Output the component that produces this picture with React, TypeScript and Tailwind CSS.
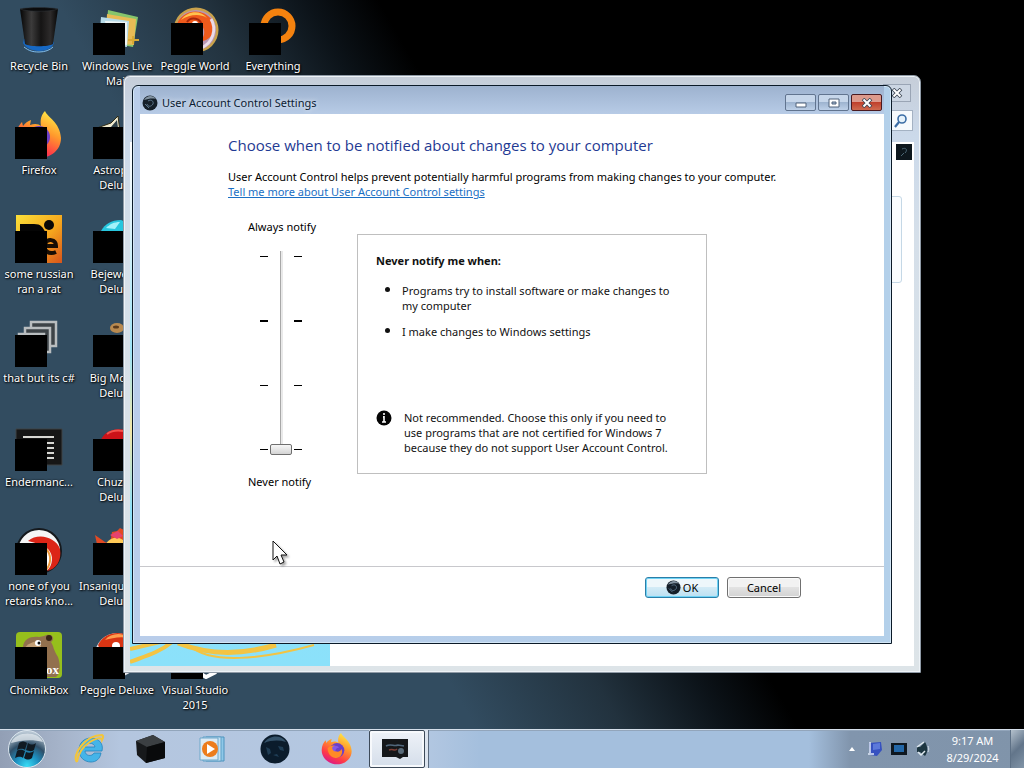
import React, { useState } from 'react';

type IconProps = { className?: string };

/* ---------- Desktop icons ---------- */

const RecycleBinIcon = () => (
  <svg viewBox="0 0 48 48" className="h-12 w-12">
    <defs>
      <linearGradient id="bin" x1="0" x2="1">
        <stop offset="0" stopColor="#050505" />
        <stop offset="0.3" stopColor="#3c3b3b" />
        <stop offset="0.55" stopColor="#151414" />
        <stop offset="0.8" stopColor="#2d2b2b" />
        <stop offset="1" stopColor="#060606" />
      </linearGradient>
    </defs>
    <path d="M8 36c2 4 8 8 16 8s13-3 15-8l-2-4H9z" fill="#1668c4" />
    <path d="M9 40c5 4 9 5 15 5s11-2 14-5" fill="none" stroke="#7fbef0" strokeWidth="1" />
    <path d="M5 2h38l-5 35c-4 3-24 3-28 0z" fill="url(#bin)" />
    <path d="M5 2c8-2 30-2 38 0-8 3-30 3-38 0z" fill="#0b0b0c" stroke="#2d3338" strokeWidth="0.6" />
  </svg>
);

const MailIcon = () => (
  <svg viewBox="0 0 48 48" className="h-12 w-12">
    <path d="M15 3l30 7-5 30-28-5z" fill="#86c56c" />
    <path d="M14 7l29 5-2 26-29-2z" fill="#e8bb55" />
    <path d="M8 10l28 4-2 26-28-3z" fill="#b7dbe8" />
    <path d="M12 14l22 1v23l-18-2z" fill="#eef5f5" />
    <path d="M28 17h4v11h-4z" fill="#cf513a" />
    <path d="M35 33h11M40 29v8" stroke="#d9a933" strokeWidth="2" />
  </svg>
);

const PeggleIcon = () => (
  <svg viewBox="0 0 48 48" className="h-12 w-12">
    <circle cx="25" cy="23" r="22.5" fill="#c9a24c" />
    <circle cx="25" cy="23" r="20" fill="#b897b4" />
    <path d="M5 20C8 4 30-2 41 13c7 9-2 22-12 21 8-7 4-19-6-17-6 1-8 5-8 9z" fill="#ef5a1c" />
    <path d="M10 13C17 3 30 3 36 11c-8-5-18-3-26 2z" fill="#ffc24d" />
    <path d="M40 12c6 10 2 24-10 29" fill="none" stroke="#eadbe8" strokeWidth="3" />
    <path d="M16 15c4-6 14-4 15 4" fill="none" stroke="#a5260c" strokeWidth="2" />
    <circle cx="24" cy="17" r="3" fill="#fff" />
  </svg>
);

const PeggleDeluxeIcon = () => (
  <svg viewBox="0 0 48 48" className="h-12 w-12">
    <circle cx="24" cy="24" r="22" fill="#e9e9ee" />
    <path d="M5 14C12-1 34-2 43 12v14H10z" fill="#d83413" />
    <path d="M12 9c6-7 17-8 24-2-9-2-17 0-24 2z" fill="#ff9d4d" />
    <circle cx="23" cy="15" r="4" fill="#fff" />
  </svg>
);

const EverythingIcon = () => (
  <svg viewBox="0 0 48 48" className="h-12 w-12">
    <circle cx="29" cy="19" r="14" fill="none" stroke="#f4820f" strokeWidth="7" />
    <path d="M19 30L3 46" stroke="#f4820f" strokeWidth="8" />
  </svg>
);

const FirefoxArt = ({ className }: IconProps) => (
  <svg viewBox="0 0 48 48" className={className}>
    <defs>
      <linearGradient id="fox" x1="0.8" y1="0" x2="0.3" y2="1">
        <stop offset="0" stopColor="#fff04a" />
        <stop offset="0.4" stopColor="#ff9a2c" />
        <stop offset="0.75" stopColor="#ff3b47" />
        <stop offset="1" stopColor="#d9178b" />
      </linearGradient>
    </defs>
    <path d="M30 0c2 6 15 11 16 27 0 12-10 20-22 20S1 38 1 26c0-7 3-12 6-15l1 4c2-3 5-5 8-6l-1 5c5-2 9-1 11 1-1-6 0-11 4-15z" fill="url(#fox)" />
    <circle cx="24" cy="26" r="11" fill="#6b3fc8" />
    <path d="M10 23c5-6 11-5 14-2-3 1-5 3-5 5 5 3 9 3 12-2 3 9-4 15-11 13-6-1-10-7-10-14z" fill="#ff8a26" />
    <path d="M17 21c4-3 8-2 10 1-4 0-6 3-5 6-4-1-6-4-5-7z" fill="#8458e8" />
  </svg>
);

const FirefoxIcon = () => <FirefoxArt className="h-12 w-12" />;

const AstropopIcon = () => (
  <svg viewBox="0 0 48 48" className="h-12 w-12">
    <path d="M4 17l14-5 7-7 2 16H4z" fill="#f2ecd0" stroke="#302a12" />
    <path d="M18 16l6-7 1 8z" fill="#2d3f48" />
  </svg>
);

const RatIcon = () => (
  <svg viewBox="0 0 48 48" className="h-12 w-12">
    <defs>
      <linearGradient id="rat" x1="0" y1="0" x2="1" y2="1">
        <stop offset="0" stopColor="#fbe03a" />
        <stop offset="0.55" stopColor="#f6a71d" />
        <stop offset="1" stopColor="#d8541b" />
      </linearGradient>
    </defs>
    <path d="M1 0h46v48H1z" fill="url(#rat)" />
    <path d="M5 9h14c7 0 9 3 12 10H5z" fill="#050505" />
    <circle cx="34" cy="10" r="5" fill="#0a0907" />
    <path d="M32 31h9c0-7-9-8-11-2-2 7 4 11 11 8" fill="none" stroke="#170d05" strokeWidth="4" />
  </svg>
);

const GemIcon = () => (
  <svg viewBox="0 0 48 48" className="h-12 w-12">
    <path d="M8 16c4-7 10-11 20-11l12 5v12H8z" fill="#27c6de" />
    <path d="M13 13c4-4 8-6 14-6l-5 7z" fill="#a2f2fa" />
  </svg>
);

const PagesIcon = () => (
  <svg viewBox="0 0 48 48" className="h-12 w-12" fill="#3d4347" stroke="#b9bdbf" strokeWidth="2.5">
    <path d="M16 3h25v24H16z" />
    <path d="M10 9h25v24H10z" />
    <path d="M4 15h25v24H4z" />
  </svg>
);

const BigMoneyIcon = () => (
  <svg viewBox="0 0 48 48" className="h-12 w-12">
    <ellipse cx="24" cy="9" rx="7" ry="5" fill="#b98a4f" />
    <ellipse cx="23" cy="8" rx="3" ry="1.5" fill="#5a3a1c" />
  </svg>
);

const ConsoleIcon = () => (
  <svg viewBox="0 0 48 48" className="h-12 w-12">
    <path d="M1 6h46v36H1z" fill="#161616" stroke="#3e4244" />
    <path d="M8 14h31M32 20h7M32 25h7M32 30h7M32 35h7" stroke="#d8d8d4" strokeWidth="2" />
  </svg>
);

const ChuzzleIcon = () => (
  <svg viewBox="0 0 48 48" className="h-12 w-12">
    <path d="M7 20c2-10 12-16 26-13l6 14z" fill="#cb1218" />
    <path d="M14 11c4-3 10-4 16-3" stroke="#f2524c" strokeWidth="2" fill="none" />
  </svg>
);

const DragonIcon = () => (
  <svg viewBox="0 0 48 48" className="h-12 w-12">
    <circle cx="24" cy="24" r="22" fill="#f5f5f5" stroke="#15191d" strokeWidth="2" />
    <path d="M13 14c10-9 28-4 32 8 2 12-4 20-13 22 6-6 7-16 1-22-5-4-12-6-20-8z" fill="#dc2517" />
    <path d="M31 22c6 6 5 15 0 21l-7 2 2-20z" fill="#fff" stroke="#f09a3a" strokeWidth="2" />
  </svg>
);

const InsaniquariumIcon = () => (
  <svg viewBox="0 0 48 48" className="h-12 w-12">
    <path d="M2 8l10 7 5 2 2-12 5-1 3-3 6 3v18H5z" fill="#e24a24" />
    <path d="M12 18c5-8 12-9 18-5v7H12z" fill="#ffca57" />
    <path d="M17 8l8-4 5 5-6 3z" fill="#e6426f" />
  </svg>
);

const ChomikIcon = () => (
  <svg viewBox="0 0 48 48" className="h-12 w-12">
    <rect x="1" y="1" width="46" height="46" rx="4" fill="#96bf1c" />
    <path d="M8 17C8 7 17 5 24 6l5-1c8-4 12 3 7 6 3 5 2 7 7 15 3 9 2 17-2 20H9z" fill="#92704e" />
    <path d="M9 18c3-5 9-8 17-8v12H9z" fill="#c29f76" />
    <circle cx="23" cy="12" r="3" fill="#fff" />
    <circle cx="24" cy="12" r="1.5" fill="#111" />
    <circle cx="34" cy="7" r="3" fill="#382417" />
    <text x="31" y="43" fontSize="13" fontWeight="bold" fontFamily="Liberation Serif, serif" fill="#fff">ox</text>
  </svg>
);

const VisualStudioIcon = () => (
  <svg viewBox="0 0 48 48" className="h-12 w-12">
    <path d="M30 43l5 3 10-5" stroke="#fff" strokeWidth="4" fill="none" />
  </svg>
);

/* ---------- System icons ---------- */

const OrbIcon = ({ className }: IconProps) => (
  <svg viewBox="0 0 16 16" className={className}>
    <circle cx="8" cy="8" r="7.5" fill="#141e28" />
    <path d="M2 5c3-5 9-5 12-1-4-1-8 0-12 1z" fill="#8292a0" />
    <path d="M6 6c3-2 6 0 5 3-2 3-5 3-6 0M3 9l4 4" stroke="#5a7388" fill="none" />
  </svg>
);

const InfoIcon = () => (
  <svg viewBox="0 0 16 16" className="h-4 w-4 shrink-0">
    <circle cx="8" cy="8" r="7.5" fill="#050505" />
    <path d="M8 3v2M8 6v6M6 12h4M7 7h1" stroke="#fff" strokeWidth="1.6" />
  </svg>
);

const StartOrb = () => (
  <svg viewBox="0 0 40 40" className="h-10 w-10">
    <defs>
      <radialGradient id="start" cx="0.5" cy="0.95" r="0.9">
        <stop offset="0" stopColor="#36dcf5" />
        <stop offset="0.35" stopColor="#1d8fc0" />
        <stop offset="0.65" stopColor="#2f4e67" />
        <stop offset="1" stopColor="#b7c6d3" />
      </radialGradient>
    </defs>
    <circle cx="20" cy="20" r="18.5" fill="url(#start)" stroke="#dbe6ee" />
    <path d="M4 14C8 2 31 1 36 13c-10-3-22-2-32 1z" fill="#e4ebf0" opacity="0.75" />
    <path d="M12 14c3-2 5-2 8 0l-2 7c-3-2-5-1-8 0zM21 14c3 2 5 2 8 0l-2 7c-3 2-5 1-8 0zM10 22c3-2 5-1 8 0l-2 7c-3-2-5-1-8 0zM19 23c3 1 5 1 8-1l-2 7c-3 2-5 2-8 0z" fill="#101a22" />
  </svg>
);

const ExplorerIcon = () => (
  <svg viewBox="0 0 32 32" className="h-8 w-8">
    <path d="M21 20c-2 4-9 3-9-2h17c2-8-4-13-11-13S6 10 6 17s5 12 12 12c5 0 9-3 10-9zM12 14c1-5 9-5 10 0z" fill="#45b4e8" fillRule="evenodd" stroke="#2484bd" strokeWidth="0.8" />
    <path d="M4 29C-2 23 12 2 29 2c2 1 1 3 0 5-1-6-23 4-25 22" fill="none" stroke="#f3c53b" strokeWidth="2" />
  </svg>
);

const BlackBoxIcon = () => (
  <svg viewBox="0 0 32 32" className="h-8 w-8">
    <path d="M1 8l17-6 12 7v16L11 30 2 22z" fill="#17191b" />
    <path d="M1 8l17-6 12 7-18 5z" fill="#3b3f42" />
    <path d="M12 14l18-5v16l-19 5z" fill="#090a0b" />
  </svg>
);

const PlayerIcon = () => (
  <svg viewBox="0 0 32 32" className="h-8 w-8">
    <path d="M9 4h18v24H9z" fill="#8fc8e8" stroke="#4d93bd" />
    <path d="M6 4h18v24H6z" fill="#c4e1f2" stroke="#5e9fc6" />
    <path d="M3 5h18v22H3z" fill="#dceaf4" stroke="#6ea8cb" />
    <circle cx="13" cy="16" r="8" fill="#ec7c1c" />
    <path d="M10 11l8 5-8 5z" fill="#fff" />
  </svg>
);

const GlobeIcon = () => (
  <svg viewBox="0 0 32 32" className="h-8 w-8">
    <circle cx="16" cy="16" r="14.5" fill="#0b1c2c" />
    <path d="M5 10c5-8 17-9 22-1-7-2-14-2-22 1z" fill="#35536b" />
    <path d="M7 14l4 2 1 4-3 2zM19 13l5 1 1 4-4-1zM14 22l4-1 2 3" fill="#1f3d55" />
  </svg>
);

const ControlPanelIcon = () => (
  <svg viewBox="0 0 28 24" className="h-6 w-7">
    <path d="M1 2h26v18h-5l-3 2-4-2H1z" fill="#15171a" />
    <path d="M5 9c5-3 8 1 12-1l6 1" stroke="#51677c" fill="none" strokeWidth="1.5" />
    <path d="M8 13c4-2 5 2 8-1" stroke="#7f4038" fill="none" strokeWidth="1.5" />
    <circle cx="20" cy="14" r="3" fill="#596b7a" />
  </svg>
);

const SearchIcon = () => (
  <svg viewBox="0 0 16 16" className="h-4 w-4">
    <circle cx="10" cy="6" r="4" fill="#e5f2fb" stroke="#3c6ea6" strokeWidth="1.6" />
    <path d="M7 9l-4 5" stroke="#3c6ea6" strokeWidth="2.2" />
  </svg>
);

const CloseGlyph = () => (
  <svg viewBox="0 0 12 10" className="h-[10px] w-3">
    <path d="M2 1l8 8M10 1L2 9" stroke="#3b4654" strokeWidth="3.6" />
    <path d="M2.5 1.5l7 7M9.5 1.5l-7 7" stroke="#fff" strokeWidth="2" />
  </svg>
);

const MinimizeGlyph = () => (
  <svg viewBox="0 0 12 10" className="h-[10px] w-3">
    <path d="M1 5h10v4H1z" fill="#fff" stroke="#51637a" />
  </svg>
);

const MaximizeGlyph = () => (
  <svg viewBox="0 0 12 10" className="h-[10px] w-3">
    <path d="M1 1h10v8H1z" fill="#fff" stroke="#51637a" />
    <path d="M4 4h4v2H4z" fill="#9fb6d2" stroke="#51637a" />
  </svg>
);

const PointerIcon = () => (
  <svg viewBox="0 0 18 26" className="pointer-events-none absolute top-[540px] left-[272px] z-30 h-[26px] w-[18px] drop-shadow-[2px_2px_1px_rgba(0,0,0,0.35)]">
    <path d="M1 1v19l4-4 3 8 4-2-3-7h6z" fill="#fff" stroke="#111" />
  </svg>
);

/* ---------- Desktop ---------- */

type Shortcut = { label: string; icon: () => React.ReactElement; badge?: boolean };

const desktopRows: Shortcut[][] = [
  [
    { label: 'Recycle Bin', icon: RecycleBinIcon, badge: false },
    { label: 'Windows Live Mail', icon: MailIcon },
    { label: 'Peggle World', icon: PeggleIcon },
    { label: 'Everything', icon: EverythingIcon },
  ],
  [
    { label: 'Firefox', icon: FirefoxIcon },
    { label: 'Astropop Deluxe', icon: AstropopIcon },
  ],
  [
    { label: 'some russian ran a rat', icon: RatIcon },
    { label: 'Bejeweled Deluxe', icon: GemIcon },
  ],
  [
    { label: 'that but its c#', icon: PagesIcon },
    { label: 'Big Money Deluxe', icon: BigMoneyIcon },
  ],
  [
    { label: 'Endermanc...', icon: ConsoleIcon },
    { label: 'Chuzzle Deluxe', icon: ChuzzleIcon },
  ],
  [
    { label: 'none of you retards kno...', icon: DragonIcon },
    { label: 'Insaniquarium Deluxe', icon: InsaniquariumIcon },
  ],
  [
    { label: 'ChomikBox', icon: ChomikIcon },
    { label: 'Peggle Deluxe', icon: PeggleDeluxeIcon },
    { label: 'Visual Studio 2015', icon: VisualStudioIcon },
  ],
];

function DesktopShortcut({ label, icon: Icon, badge = true }: Shortcut) {
  return (
    <button className="flex h-[104px] w-[78px] flex-col items-center gap-[3px] pt-[7px] text-white">
      <span className="relative block h-12 w-12">
        <Icon />
        {badge && <span className="absolute bottom-0 left-0 h-8 w-8 bg-black" />}
      </span>
      <span className="px-px text-center [text-shadow:1px_1px_2px_#000,0_0_2px_#000]">{label}</span>
    </button>
  );
}

/* ---------- Windows ---------- */

function ActionCenterWindow() {
  return (
    <section
      aria-label="Action Center"
      className="absolute top-[75px] right-[103px] bottom-[56px] left-[123px] flex flex-col rounded-t-[7px] border border-[#8f9aa6] bg-[linear-gradient(#c6ced9,#cbd9ea_60px,#d5dfe9_160px,#dde4e8)] px-[6px] pb-[6px] shadow-[inset_0_0_0_1px_#eef3f7]"
    >
      <div className="flex justify-end px-[3px] pt-2">
        <button aria-label="Close" className="flex h-[18px] w-7 items-center justify-center border border-[#9aa5b5] bg-[#ccd6e3]">
          <CloseGlyph />
        </button>
      </div>
      <div className="flex justify-end px-px pt-2 pb-[11px]">
        <button aria-label="Search" className="flex h-[21px] w-[26px] items-center justify-center border border-[#a4b2c3] bg-[#f6fafd]">
          <SearchIcon />
        </button>
      </div>
      <div className="flex flex-1 bg-white">
        <aside className="flex w-[200px] flex-col justify-end bg-[linear-gradient(#fff,#dff3fa_15%,#9fe4f7_40%,#f2e7a6_55%,#8fe0f8_70%,#8be1fa)]">
          <svg viewBox="0 0 200 28" className="h-7 w-full" fill="none" stroke="#f3c443">
            <path d="M0 24C16 18 30 14 42 4M0 11l30-7" strokeWidth="4" />
            <path d="M48 5c30 12 64 12 98 2" strokeWidth="5" />
            <path d="M60 8c20 18 70 14 124-1" strokeWidth="2" />
          </svg>
        </aside>
        <div className="flex flex-1 items-start justify-end">
          <div className="mt-[54px] mr-[22px] h-[87px] w-10 rounded-[3px] border border-[#c5d8e6] bg-[#fafdff]" />
        </div>
        <div className="-ml-7 pt-[2px] pr-[2px]">
          <svg viewBox="0 0 16 16" className="h-4 w-4">
            <path d="M0 0h16v16H0z" fill="#0d171d" />
            <path d="M6 5c4-2 6 1 3 4M5 12l3-3" stroke="#4a6674" fill="none" />
          </svg>
        </div>
      </div>
    </section>
  );
}

const levels = ['Never notify', 'Notify without dimming', 'Default', 'Always notify'];

function Ticks() {
  return (
    <div aria-hidden="true" className="flex flex-col justify-between py-[5px]">
      <span className="h-px w-2 bg-black" />
      <span className="h-[2px] w-2 bg-black" />
      <span className="h-px w-2 bg-black" />
      <span className="h-px w-2 bg-black" />
    </div>
  );
}

function NotifySlider() {
  const [level, setLevel] = useState(0);

  return (
    <div className="flex w-[129px] flex-col pl-5">
      <label htmlFor="notify-level">Always notify</label>
      <div className="mt-[17px] flex h-[204px] gap-[2px] pl-3">
        <Ticks />
        <input
          id="notify-level"
          type="range"
          min={0}
          max={3}
          value={level}
          aria-valuetext={levels[level]}
          onChange={(e) => setLevel(Number(e.target.value))}
          className="h-[204px] w-[22px] appearance-none bg-[linear-gradient(90deg,#a8a8a8_1px,#e9e9e9_1px)] bg-[length:3px_100%] bg-center bg-no-repeat [direction:rtl] [writing-mode:vertical-lr] [&::-webkit-slider-thumb]:h-[11px] [&::-webkit-slider-thumb]:w-[22px] [&::-webkit-slider-thumb]:appearance-none [&::-webkit-slider-thumb]:rounded-[2px] [&::-webkit-slider-thumb]:border [&::-webkit-slider-thumb]:border-[#6f6f6f] [&::-webkit-slider-thumb]:bg-[linear-gradient(#f7f7f7,#d4d4d4)]"
        />
        <Ticks />
      </div>
      <p className="mt-[19px]">Never notify</p>
    </div>
  );
}

function UacWindow() {
  return (
    <section
      aria-label="User Account Control Settings"
      className="absolute top-[85px] right-[132px] left-[132px] z-10 rounded-t-[6px] border border-[#0b1a28] bg-[linear-gradient(90deg,#b9cdea,#b3d0ea)] px-[7px] pb-[7px] shadow-[inset_0_0_0_1px_#d3e6f6]"
    >
      <header className="flex h-7 items-center bg-[linear-gradient(#9db2cf,#b7cbe6)] pt-[5px] pl-[2px]">
        <OrbIcon className="h-4 w-4" />
        <h2 className="ml-1 flex-1 text-[#0c1c33] [text-shadow:0_0_5px_#fff]">User Account Control Settings</h2>
        <div className="flex gap-[2px] pr-[2px]">
          <button aria-label="Minimize" className="flex h-[17px] w-[31px] items-center justify-center rounded-[2px] border border-[#61748f] bg-[linear-gradient(#c6d6ea_45%,#9eb4d0_50%,#bdd0e8)]">
            <MinimizeGlyph />
          </button>
          <button aria-label="Maximize" className="flex h-[17px] w-[31px] items-center justify-center rounded-[2px] border border-[#61748f] bg-[linear-gradient(#c6d6ea_45%,#9eb4d0_50%,#bdd0e8)]">
            <MaximizeGlyph />
          </button>
          <button aria-label="Close" className="flex h-[17px] w-[31px] items-center justify-center rounded-[2px] border border-[#4a1a20] bg-[linear-gradient(#dd9a8c_45%,#c0402c_50%,#cf6b50)]">
            <CloseGlyph />
          </button>
        </div>
      </header>

      <div className="bg-white">
        <div className="px-[88px] pt-5 pb-[77px]">
          <h1 className="font-['Open_Sans','Noto_Sans',sans-serif] text-[15px] leading-[22px] text-[#1f3a93]">
            Choose when to be notified about changes to your computer
          </h1>
          <p className="mt-[13px]">User Account Control helps prevent potentially harmful programs from making changes to your computer.</p>
          <a href="#more" className="block w-fit text-[#1a6fc4] underline">Tell me more about User Account Control settings</a>

          <div className="mt-5 flex">
            <NotifySlider />
            <div className="mt-[15px] h-60 w-[350px] border border-[#bfbfbf] px-[18px] pt-[18px] text-[#111]">
              <p className="font-bold">Never notify me when:</p>
              <ul className="mt-[14px] h-[102px] list-disc space-y-[10px] pl-[26px] marker:text-[14px]">
                <li>Programs try to install software or make changes to my computer</li>
                <li>I make changes to Windows settings</li>
              </ul>
              <div className="mt-[26px] flex gap-3">
                <InfoIcon />
                <p className="pr-3">
                  Not recommended. Choose this only if you need to use programs that are not certified for Windows 7 because they do not support User Account Control.
                </p>
              </div>
            </div>
          </div>
        </div>

        <footer className="flex justify-end gap-2 border-t border-[#c8c8cc] pt-[10px] pr-[83px] pb-[38px]">
          <button className="flex h-[21px] w-[74px] items-center justify-center gap-[2px] rounded-[3px] border border-[#2b7ea8] bg-[linear-gradient(#eef7fb_45%,#d3ebf6_50%,#bbe0f2)] shadow-[inset_0_0_0_1px_#6fd3f5]">
            <OrbIcon className="h-[15px] w-[15px]" />
            OK
          </button>
          <button className="flex h-[21px] w-[74px] items-center justify-center rounded-[3px] border border-[#707070] bg-[linear-gradient(#f2f2f2_45%,#e2e2e2_50%,#d2d2d2)] shadow-[inset_0_0_0_1px_#fafafa]">
            Cancel
          </button>
        </footer>
      </div>
    </section>
  );
}

/* ---------- Taskbar ---------- */

const pinned = [
  { label: 'Internet Explorer', icon: ExplorerIcon },
  { label: 'Explorer', icon: BlackBoxIcon },
  { label: 'Windows Media Player', icon: PlayerIcon },
  { label: 'Web', icon: GlobeIcon },
  { label: 'Firefox', icon: () => <FirefoxArt className="h-8 w-8" /> },
];

function Taskbar() {
  return (
    <nav className="z-20 flex h-[39px] items-stretch border-t border-[#d5dfea] bg-[linear-gradient(90deg,#929fb5,#a5b3c9_60px,#b4c6df_120px,#b4c8e2_420px,#a4bfdd_480px,#a4bfdd_79%,#8195ad_83%,#8094aa)] shadow-[inset_0_1px_0_#92a5bb]">
      <button aria-label="Start" className="flex w-[58px] items-center pl-[7px]">
        <StartOrb />
      </button>
      {pinned.map(({ label, icon: Icon }) => (
        <button key={label} aria-label={label} className="flex w-[62px] items-center justify-center">
          <Icon />
        </button>
      ))}
      <button aria-label="Control Panel" className="ml-px flex w-[60px] border-r border-[#5a6a7e] bg-[#dce4ee] pr-[3px]">
        <span className="flex flex-1 items-center justify-center rounded-[2px] border border-[#3d4a59] bg-[linear-gradient(#eef2f8,#d5deea)] pr-1 shadow-[inset_0_0_0_2px_#f7f9fc]">
          <ControlPanelIcon />
        </span>
      </button>

      <div className="ml-auto flex items-center text-white">
        <button aria-label="Show hidden icons" className="mr-[11px]">
          <svg viewBox="0 0 8 6" className="h-[6px] w-2"><path d="M4 1l3 4H1z" fill="#fff" /></svg>
        </button>
        <button aria-label="Network" className="mr-2">
          <svg viewBox="0 0 16 16" className="h-4 w-4">
            <path d="M2 2l12-1 1 8-5 6-7-1z" fill="#3651c0" />
            <path d="M6 3l7-1v6l-7 1z" fill="#5c79da" />
            <path d="M3 1v11M1 13h6" stroke="#dfe8f6" strokeWidth="1.5" />
          </svg>
        </button>
        <button aria-label="Display" className="mr-2">
          <svg viewBox="0 0 16 14" className="h-[14px] w-4">
            <path d="M0 1h16v12H0z" fill="#0e1720" />
            <path d="M3 3h10v7H3z" fill="#2367a8" />
          </svg>
        </button>
        <button aria-label="Volume">
          <svg viewBox="0 0 16 16" className="h-4 w-4">
            <path d="M2 6h3l5-5c3 5 3 10 0 14l-5-4H2z" fill="#1c3540" />
            <path d="M2 6l7-5M3 11l3 3 4-4" stroke="#dfe9ee" strokeWidth="1.5" fill="none" />
            <path d="M13 5c1 2 1 4 0 6" stroke="#cfdbe4" fill="none" />
          </svg>
        </button>
        <time className="w-[79px] pl-1 text-center leading-[17px]">
          9:17 AM
          <br />
          8/29/2024
        </time>
        <button aria-label="Show desktop" className="h-full w-[14px] border-l border-[#5d7085] bg-[linear-gradient(135deg,#b4c1cd,#62758a_50%,#8194a7)]" />
      </div>
    </nav>
  );
}

export default function App() {
  return (
    <div className="flex min-h-screen flex-col overflow-hidden bg-[linear-gradient(60deg,#324c60_34%,#22323e_44%,#0c1319_51%,#000_56%)] font-['Noto_Sans','Open_Sans',sans-serif] text-[11px] leading-[15px] text-black">
      <main className="relative flex-1">
        <div>
          {desktopRows.map((row, i) => (
            <div key={i} className="flex">
              {row.map((item) => (
                <DesktopShortcut key={item.label} {...item} />
              ))}
            </div>
          ))}
        </div>
        <ActionCenterWindow />
        <UacWindow />
        <PointerIcon />
      </main>
      <Taskbar />
    </div>
  );
}
